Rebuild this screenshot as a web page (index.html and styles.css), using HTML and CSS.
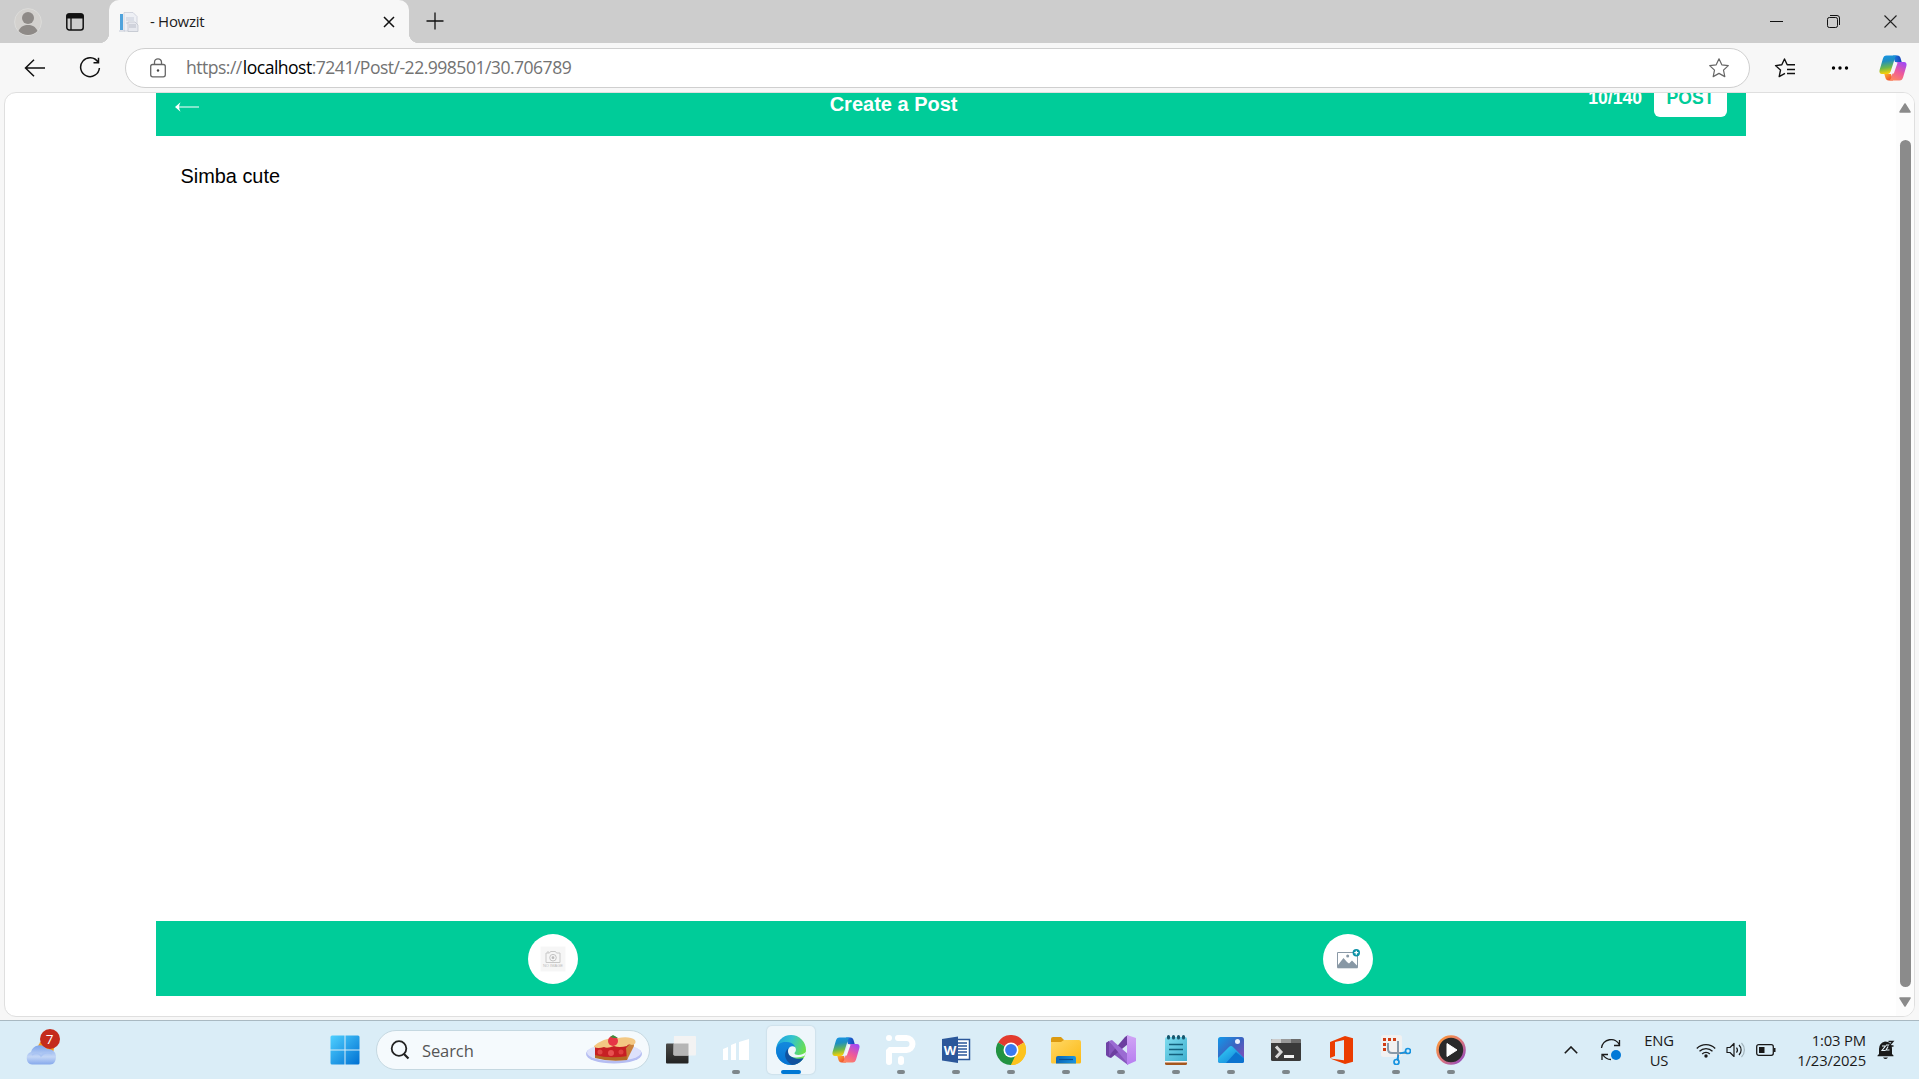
FILE: index.html
```html
<!DOCTYPE html>
<html lang="en">
<head>
<meta charset="utf-8">
<title>- Howzit</title>
<link rel="stylesheet" href="styles.css">
</head>
<body>
<svg class="defs" width="0" height="0" aria-hidden="true">
  <defs>
    <linearGradient id="cpA" x1="0" y1="0" x2="0.15" y2="1"><stop offset="0" stop-color="#1595e8"/><stop offset=".35" stop-color="#1f8fc0"/><stop offset=".7" stop-color="#6cb84c"/><stop offset="1" stop-color="#f5cf0a"/></linearGradient>
    <linearGradient id="cpB" x1="0.7" y1="0" x2="0.2" y2="1"><stop offset="0" stop-color="#a54af0"/><stop offset=".5" stop-color="#ee5a9a"/><stop offset="1" stop-color="#ff8a5c"/></linearGradient>
    <linearGradient id="cpC" x1="0" y1="0" x2="1" y2="0"><stop offset="0" stop-color="#1b7fe0"/><stop offset="1" stop-color="#1740b8"/></linearGradient>
    <linearGradient id="cpD" x1="0" y1="0" x2="1" y2="1"><stop offset="0" stop-color="#ffb02e"/><stop offset="1" stop-color="#ea3a30"/></linearGradient>
    <symbol id="copilot" viewBox="0 0 28 26">
      <path d="M14 .5h4.500c1.700 0 2.500 1 3 2.500l1.200 4H16z" fill="url(#cpC)"/>
      <path d="M14 25.500H9.500c-1.700 0-2.500-1-3-2.500l-1.200-4H12z" fill="url(#cpD)"/>
      <path d="M7.500.5h10.800c-1.300.3-2 1.300-2.500 3l-4 12.500c-.6 2-1.500 3-3.300 3H3C.8 19 0 17.200.6 15L3.800 4C4.500 1.500 5.500.5 7.500.5z" fill="url(#cpA)"/>
      <path d="M20.500 25.500H9.700c1.300-.3 2-1.300 2.500-3l4-12.500c.6-2 1.500-3 3.300-3H25c2.200 0 3 1.800 2.400 4l-3.200 11c-.7 2.500-1.700 3.500-3.700 3.500z" fill="url(#cpB)"/>
      <path d="M15.800 8h2.700l-3.700 10.500h-3z" fill="#f3f3fa"/>
    </symbol>
    <linearGradient id="win" x1="0" y1="0" x2="1" y2="1"><stop offset="0" stop-color="#4fd0ff"/><stop offset="1" stop-color="#0070d2"/></linearGradient>
    <linearGradient id="cloud" x1="0" y1="0" x2="0" y2="1"><stop offset="0" stop-color="#7da4ea"/><stop offset=".6" stop-color="#c3d6f6"/><stop offset="1" stop-color="#86a9ec"/></linearGradient>
    <linearGradient id="dark" x1="0" y1="0" x2="0" y2="1"><stop offset="0" stop-color="#4a4a48"/><stop offset="1" stop-color="#222"/></linearGradient>
    <linearGradient id="edgeTop" x1="0" y1="0" x2="1" y2=".4"><stop offset="0" stop-color="#1b9de2"/><stop offset=".5" stop-color="#32c3cf"/><stop offset="1" stop-color="#6be04c"/></linearGradient>
    <linearGradient id="edgeLow" x1="0" y1="0" x2="0" y2="1"><stop offset="0" stop-color="#1389dd"/><stop offset="1" stop-color="#0672d3"/></linearGradient>
    <linearGradient id="folder" x1="0" y1="0" x2="1" y2="1"><stop offset="0" stop-color="#ffd866"/><stop offset="1" stop-color="#fcb913"/></linearGradient>
    <linearGradient id="folderTag" x1="0" y1="0" x2="1" y2="0"><stop offset="0" stop-color="#0a66b8"/><stop offset="1" stop-color="#1b95e0"/></linearGradient>
    <linearGradient id="note" x1="0" y1="0" x2="1" y2="1"><stop offset="0" stop-color="#7fdcef"/><stop offset="1" stop-color="#3fb0cf"/></linearGradient>
    <linearGradient id="photo" x1="0" y1="0" x2="1" y2="1"><stop offset="0" stop-color="#1299ea"/><stop offset=".5" stop-color="#3c62c0"/><stop offset="1" stop-color="#9349b8"/></linearGradient>
    <linearGradient id="hill" x1="0" y1="0" x2="1" y2="1"><stop offset="0" stop-color="#38d4f5"/><stop offset="1" stop-color="#0c78d8"/></linearGradient>
    <linearGradient id="ring" x1="0" y1="0" x2="1" y2="1"><stop offset="0" stop-color="#ff9a2e"/><stop offset=".5" stop-color="#e07878"/><stop offset="1" stop-color="#8a44c8"/></linearGradient>
    <linearGradient id="vsR" x1="0" y1="0" x2="0" y2="1"><stop offset="0" stop-color="#d0a4f5"/><stop offset="1" stop-color="#b77df0"/></linearGradient>
  </defs>
</svg>

<header class="titlebar">
  <svg class="avatar" width="28" height="28" viewBox="0 0 28 28"><circle cx="14" cy="14" r="13.400" fill="#d3d1ce" stroke="#dcdcda"/><circle cx="14" cy="10" r="6" fill="#8e8a87"/><path d="M4.500 23c2-4.500 5.500-6 9.500-6s7.500 1.500 9.500 6a13.400 13.400 0 0 1-19 0z" fill="#8e8a87"/></svg>
  <svg class="tab-actions" width="20" height="20" viewBox="0 0 20 20"><rect x="1.800" y="2" width="16.400" height="16" rx="2.500" fill="none" stroke="#111" stroke-width="1.500"/><path d="M1.500 6.500V4q0-2.700 2.700-2.700h11.600q2.700 0 2.700 2.700v2.500z" fill="#111"/><path d="M6 6v12" stroke="#111" stroke-width="1.300"/></svg>
  <div class="tab">
    <svg width="20" height="20" viewBox="0 0 20 20"><path d="M5 .5h9l4 4V19H5z" fill="#eef0f5" stroke="#c9cdd8" stroke-width=".8"/><path d="M1 2h3v16H1z" fill="#4fa3dc"/><path d="M0 19h6M7 6h8M7 8h8M7 11h6" stroke="#c6cbd8"/><path d="M9 10h7l3 3v6.500H9z" fill="#e6e8ee" stroke="#bcc0ca" stroke-width=".7"/><path d="M10 13h7M10 15h7" stroke="#b9bdc9"/></svg>
    <span class="tab-title">- Howzit</span>
    <svg class="tab-close" width="12" height="12" viewBox="0 0 12 12"><path d="M1 1l10 10M11 1L1 11" stroke="#111" stroke-width="1.500"/></svg>
  </div>
  <svg class="new-tab" width="18" height="18" viewBox="0 0 18 18"><path d="M9 .5v17M.5 9h17" stroke="#111" stroke-width="1.300"/></svg>
  <div class="window-controls">
    <svg width="13" height="13" viewBox="0 0 13 13"><path d="M0 6.500h13" stroke="#111"/></svg>
    <svg width="13" height="13" viewBox="0 0 13 13"><rect x=".5" y="2.500" width="10" height="10" rx="1.800" fill="none" stroke="#111"/><path d="M3 .5h7q2.500 0 2.500 2.500v7" fill="none" stroke="#111"/></svg>
    <svg width="13" height="13" viewBox="0 0 13 13"><path d="M.5.5l12 12M12.500.5l-12 12" stroke="#222" stroke-width="1.100"/></svg>
  </div>
</header>

<nav class="toolbar">
  <svg class="back" width="22" height="18" viewBox="0 0 22 18"><path d="M21 9H1.500M10 .8L1.500 9l8.500 8.200" fill="none" stroke="#111" stroke-width="1.500"/></svg>
  <svg class="reload" width="22" height="22" viewBox="0 0 22 22"><path d="M19 5.200A9.400 9.400 0 1 0 20.400 11M19.500.8v5h-5" fill="none" stroke="#111" stroke-width="1.500"/></svg>
  <div class="address">
    <svg class="lock" width="18" height="20" viewBox="0 0 18 20"><rect x="1.700" y="6.500" width="14.600" height="12.300" rx="2" fill="none" stroke="#666" stroke-width="1.300"/><path d="M5.500 6.500V4.300a3.500 3.500 0 0 1 7 0v2.200" fill="none" stroke="#666" stroke-width="1.300"/><circle cx="9" cy="12.500" r="1.200" fill="#444"/></svg>
    <span class="url">https://<b>localhost</b>:7241/Post/-22.998501/30.706789</span>
    <svg class="star" width="22" height="22" viewBox="0 0 22 22"><path d="M11 1.800l2.800 6 6.500.8-4.800 4.500 1.300 6.500L11 16.400l-5.800 3.200 1.300-6.500L1.700 8.600l6.500-.8z" fill="none" stroke="#666" stroke-width="1.200" stroke-linejoin="round"/></svg>
  </div>
  <svg class="favorites" width="22" height="22" viewBox="0 0 22 22"><path d="M11 16.300l-5.800 3.300 1.300-6.500L1.500 8.600l6.300-.8L10.500 2l2.700 5.800H21M13 12.500h8M13 16.500h8" fill="none" stroke="#111" stroke-width="1.400" stroke-linejoin="round"/></svg>
  <svg class="more" width="18" height="6" viewBox="0 0 18 6"><circle cx="2.500" cy="3" r="1.700"/><circle cx="9" cy="3" r="1.700"/><circle cx="15.500" cy="3" r="1.700"/></svg>
  <svg class="copilot-button" width="28" height="26"><use href="#copilot"/></svg>
</nav>

<main class="viewport">
  <div class="page">
    <div class="post-header">
      <svg class="page-back" width="24" height="10" viewBox="0 0 24 10"><path d="M1 5h23" stroke="#fff" stroke-width="1.200" /><path d="M0 5L5.500.3Q4 3.500 4 5t1.500 4.700z" fill="#fff"/></svg>
      <h1>Create a Post</h1>
      <div class="post-actions"><span>10/140</span><button>POST</button></div>
    </div>
    <div class="post-text">Simba cute</div>
    <div class="post-footer">
      <div><span class="round"><svg width="26" height="26" viewBox="0 0 26 26"><path d="M.5.5h25v25H.5z" fill="#f6f6f6"/><path d="M6 7h3.500l1-1.500h5L16.500 7H20v9.500H6zM7 6h2" fill="none" stroke="#c8c8c8"/><circle cx="13" cy="11.700" r="3.300" fill="none" stroke="#c4c4c4"/><circle cx="13" cy="11.700" r="1.400" fill="#bbb"/><text x="13" y="21" text-anchor="middle" class="no-image">NO IMAGE</text></svg></span></div>
      <div><span class="round"><svg width="26" height="26" viewBox="0 0 26 26"><path d="M2.500 6.500h20v15.300h-20z" fill="#fff" stroke="#8a99a6"/><path d="M3 19l3.500-4.500 2-2.500 3.500 4 2 1.500 3-3 5 5v2.500H3z" fill="#8898a5"/><circle cx="12.700" cy="10" r="1.500" fill="#8898a5"/><circle cx="21.300" cy="6.700" r="3.700" fill="#0b91a6"/><path d="M21.300 4.700v4M19.300 6.700h4" stroke="#fff" stroke-width="1.300"/></svg></span></div>
    </div>
  </div>
  <div class="scrollbar">
    <svg width="12" height="10" viewBox="0 0 12 10"><path d="M6 1l5 8H1z" fill="#8b8b8b" stroke="#8b8b8b" stroke-width="1.500" stroke-linejoin="round"/></svg>
    <div class="thumb"></div>
    <svg width="12" height="10" viewBox="0 0 12 10"><path d="M6 9l5-8H1z" fill="#8b8b8b" stroke="#8b8b8b" stroke-width="1.500" stroke-linejoin="round"/></svg>
  </div>
</main>

<footer class="taskbar">
  <svg class="weather" width="36" height="38" viewBox="0 0 36 38"><circle cx="21" cy="20" r="8" fill="#f59a1c"/><path d="M7 36.500a6.500 6.500 0 0 1-1-12.500 9 9 0 0 1 16-3 8 8 0 0 1 9 7c0 5-2 8.500-6 8.500z" fill="url(#cloud)"/><path d="M7 27c4-3 8-1 9 1 3-4 8-4 11-2" fill="none" stroke="#a9c3f3" stroke-width="1.500"/><circle cx="25" cy="11" r="10" fill="#c42b1c"/><text x="24.500" y="16" text-anchor="middle" class="badge">7</text></svg>
  <svg class="start" width="30" height="30" viewBox="0 0 30 30"><path d="M.5 2q0-1.500 1.500-1.500h12.500v14H.5zM15.500.5H28q1.500 0 1.500 1.500v12.500h-14zM.5 15.500h14v14H2q-1.500 0-1.500-1.500zM15.500 15.500h14V28q0 1.500-1.500 1.500H15.500z" fill="url(#win)"/></svg>
  <div class="search">
    <svg width="20" height="20" viewBox="0 0 20 20"><circle cx="9" cy="8.500" r="7.300" fill="none" stroke="#222" stroke-width="1.800"/><path d="M14 14l4.500 4.500" stroke="#222" stroke-width="2.200"/></svg>
    <span>Search</span>
    <svg class="pie" width="56" height="30" viewBox="0 0 56 30"><ellipse cx="28" cy="19" rx="28" ry="9.500" fill="#b5bdf2"/><ellipse cx="28" cy="17.500" rx="27" ry="8.500" fill="#dde1fb"/><path d="M9 12l36-3-4 14q-18 3-32-2z" fill="#c71f24"/><path d="M9 20q14 4 33 1l-1 4q-18 2-32-2z" fill="#b46a25"/><path d="M47 6l1 5-7 14-1-12z" fill="#c9803b"/><path d="M8 11Q18 2 32 3q12-2 17 2 2 4-3 5-4-2-5 1-8 2-13 0-7 3-10 1-6 2-10 0z" fill="#f3c884"/><circle cx="14" cy="17" r="2.500" fill="#e04545"/><circle cx="25" cy="18" r="3" fill="#e85050"/><circle cx="35" cy="17" r="2.500" fill="#e04040"/><circle cx="27" cy="6" r="5" fill="#e63546"/><path d="M24 2l3-2 5 3-4 0z" fill="#3d8b3a"/></svg>
  </div>
  <div class="apps">
    <div class="app"><svg width="30" height="30" viewBox="0 0 30 30"><path d="M0 9.500q0-1 1-1h21.500v19q0 1-1 1H1q-1 0-1-1z" fill="url(#dark)"/><path d="M8 1h21q1 0 1 1v17q0 1.500-1 1.500H9q-1.500 0-1.500-1z" fill="#f3f3f3"/><path d="M7.500 8.500h15v12H9q-1.500 0-1.500-1z" fill="#b5b5b5"/></svg></div>
    <div class="app open"><svg width="30" height="30" viewBox="0 0 30 30"><path d="M2 14l5-2v13H2zM10 10l5-2v17h-5zM18 7l10-3v21H18z" fill="#fff"/></svg></div>
    <div class="app active"><svg width="30" height="30" viewBox="0 0 30 30"><circle cx="15" cy="15" r="15" fill="url(#edgeTop)"/><path d="M0 15C1 8 6 6.500 11 7c6 .5 8 4 8 5-2-1-7 0-7 5 0 6 6 9 10 8.500 3-.4 4-1.500 5-1.700A15 15 0 0 1 15 30C6 30 0 23 0 15z" fill="url(#edgeLow)"/><path d="M12.500 13c-5 4-5 12 3.500 17 5 0 9-3 11.500-7-5 2-16 1-15-10z" fill="#11529f"/><path d="M19 12c-3-2-7 0-7 4 0 3 2 6.500 8 6.500 4 0 6-1 8-1.500 1 0 2-3 2-4-4 4-12 3.500-11.500 1 .8-1 2.500-3 .5-6z" fill="#eef6fb"/></svg></div>
    <div class="app"><svg width="28" height="26"><use href="#copilot"/></svg></div>
    <div class="app open"><svg width="30" height="30" viewBox="0 0 30 30"><path d="M12 3h8.500a6 6 0 0 1 0 12H3v12" fill="none" stroke="#fff" stroke-width="6" stroke-linecap="round" stroke-linejoin="bevel"/><circle cx="3" cy="3" r="3" fill="#fff"/><path d="M15 24v3" stroke="#fff" stroke-width="6" stroke-linecap="round"/></svg></div>
    <div class="app open"><svg width="30" height="30" viewBox="0 0 30 30"><path d="M15 4.500h13.500v20H15z" fill="#fff" stroke="#2b579a" stroke-width="1.500"/><path d="M17 8h9M17 11h9M17 14h9M17 17h9M17 20h9" stroke="#2b579a" stroke-width="1.300"/><path d="M1 4l16-2.500V28L1 25.500z" fill="#2b579a"/><text x="9" y="19.500" text-anchor="middle" class="word">W</text></svg></div>
    <div class="app open"><svg width="30" height="30" viewBox="0 0 30 30"><path d="M15 15L2 7.500A15 15 0 0 1 28 7.500z" fill="#e33b2e"/><path d="M15 15L28 7.500A15 15 0 0 1 15 30z" fill="#fcc31e"/><path d="M2 7.500A15 15 0 0 0 15 30l6.500-11.250L15 15z" fill="#229342"/><path d="M15 7.500h13L20 19l-5 11a15 15 0 0 0 13-22.500z" fill="#fcc31e"/><circle cx="15" cy="15" r="7.500" fill="#fff"/><circle cx="15" cy="15" r="5.900" fill="#3a7af0"/></svg></div>
    <div class="app open"><svg width="30" height="30" viewBox="0 0 30 30"><path d="M0 4q0-2 2-2h8l3 3v5H0z" fill="#dc9a10"/><path d="M0 7h10l3-2h15q2 0 2 2v20q0 1.500-1.500 1.500h-27Q0 28.500 0 27z" fill="url(#folder)"/><path d="M5 28.500V23q0-2 2-2h16q2 0 2 2v5.500z" fill="url(#folderTag)"/><path d="M8 24.500h14" stroke="#0a4f93" stroke-width="1.200"/></svg></div>
    <div class="app open"><svg width="30" height="30" viewBox="0 0 30 30"><path d="M0 8l3-2 19 17v7L6 18l-4 4-2-2z" fill="#8655bd"/><path d="M0 8l3-2v16l-3-2z" fill="#6f42a5"/><path d="M22 0v9L5 23l-3-1L19 2z" fill="#6c3fa0"/><path d="M3 6l3-1 17 15-1 9z" fill="#9b6bd3"/><path d="M21 0l9 3v23l-9 4z" fill="url(#vsR)"/></svg></div>
    <div class="app open"><svg width="30" height="30" viewBox="0 0 30 30"><path d="M4 26.500h22v2q0 1.500-1.500 1.500h-19Q4 30 4 28.500z" fill="#a4561d"/><path d="M4 25h22v2.500H4z" fill="#f4f4f4"/><path d="M4 4q0-2 2-2h18q2 0 2 2v22H4z" fill="url(#note)"/><path d="M8 9.500h14M8 14.500h14M8 19.500h14" stroke="#14607c" stroke-width="1.600"/><path d="M7.500 1.500v1.500M12.500 1.500v1.500M17.500 1.500v1.500M22.500 1.500v1.500" stroke="#17576e" stroke-width="3" stroke-linecap="round"/></svg></div>
    <div class="app open"><svg width="30" height="30" viewBox="0 0 30 30"><rect x="2" y="2" width="26" height="26" rx="2.500" fill="url(#photo)"/><path d="M2 23l11-11q2-2 4 0l11 11v2.500q0 2.500-2.500 2.500h-21Q2 28 2 25.500z" fill="url(#hill)"/><path d="M10 28l10-11 8 7v1.500q0 2.500-2.500 2.500z" fill="#0b73cf"/><circle cx="21.500" cy="6.500" r="2.500" fill="#eaf0ff"/></svg></div>
    <div class="app open"><svg width="30" height="30" viewBox="0 0 30 30"><rect y="4" width="30" height="22" rx="1.500" fill="#3a3a3a"/><path d="M0 8V5.500Q0 4 1.500 4H10v4z" fill="#ccc"/><path d="M10 4h10v4H10z" fill="#999"/><path d="M20 4h8.500Q30 4 30 5.500V8H20z" fill="#6b6b6b"/><path d="M5 11.500l5 5.500-5 5.500" fill="none" stroke="#d8d8d8" stroke-width="3"/><path d="M13 21.500h10" stroke="#f2f2f2" stroke-width="3"/></svg></div>
    <div class="app open"><svg width="30" height="30" viewBox="0 0 30 30"><path d="M4 7l15-6 8 2.300v23.400L19 29 4 23.500l14 1.700V5L9 7v14l-5 2z" fill="#eb3c00"/></svg></div>
    <div class="app open"><svg width="30" height="30" viewBox="0 0 30 30"><rect x="0" y="0" width="21" height="22" rx="2.500" fill="#f1f1f1"/><path d="M3.500 16V4.500H16" fill="none" stroke="#d13d13" stroke-width="3" stroke-dasharray="3 2"/><path d="M7 8v6q0 4 4 4h15M17 6v20" fill="none" stroke="#8899a8" stroke-width="2"/><circle cx="27" cy="16" r="2.500" fill="none" stroke="#1492e0" stroke-width="1.700"/><circle cx="15.500" cy="27" r="2.500" fill="none" stroke="#1492e0" stroke-width="1.700"/><path d="M19 18.500l5.500-1.500M17.500 20l-1.300 4.500" stroke="#1492e0" stroke-width="1.700"/></svg></div>
    <div class="app open"><svg width="30" height="30" viewBox="0 0 30 30"><circle cx="15" cy="15" r="13.500" fill="#2a2a2a" stroke="url(#ring)" stroke-width="2.600"/><path d="M11 8.500l10 6.500-10 6.500z" fill="#fff" stroke="#fff" stroke-linejoin="round"/></svg></div>
  </div>
  <div class="tray">
    <svg class="chevron" width="14" height="8" viewBox="0 0 14 8"><path d="M.8 7.300L7 1l6.200 6.300" fill="none" stroke="#1a1a1a" stroke-width="1.600"/></svg>
    <svg class="sync" width="22" height="22" viewBox="0 0 22 22"><path d="M1.500 9A9.500 9.500 0 0 1 19.500 6M19.500 1v5.500H14M11 20.500a9.500 9.500 0 0 1-8-4.500M2 21v-5.500h6" fill="none" stroke="#1a1a1a" stroke-width="1.300"/><circle cx="16" cy="16" r="5" fill="#0078d7"/></svg>
    <div class="lang">ENG<br>US</div>
    <svg class="wifi" width="20" height="16" viewBox="0 0 20 16"><path d="M.8 6.500a13 13 0 0 1 18.400 0M3.500 9.300a9.200 9.200 0 0 1 13 0M6.200 12a5.400 5.400 0 0 1 7.600 0" fill="none" stroke="#1a1a1a" stroke-width="1.300"/><circle cx="10" cy="14" r="1.700" fill="#1a1a1a"/></svg>
    <svg class="sound" width="20" height="16" viewBox="0 0 20 16"><path d="M1 5.500h3l4-4v13l-4-4H1z" fill="none" stroke="#1a1a1a" stroke-width="1.200" stroke-linejoin="round"/><path d="M10.500 5.500a4 4 0 0 1 0 5M13 3a7 7 0 0 1 0 10" fill="none" stroke="#1a1a1a" stroke-width="1.200"/><path d="M15.500 1a10 10 0 0 1 0 14" fill="none" stroke="#a3b4bc" stroke-width="1.200"/></svg>
    <svg class="battery" width="20" height="12" viewBox="0 0 20 12"><rect x=".7" y=".7" width="16.600" height="10.600" rx="2" fill="none" stroke="#1a1a1a" stroke-width="1.300"/><path d="M3 3h5.500v6H3zM18 4h1.500v4H18z" fill="#1a1a1a"/></svg>
    <div class="clock">1:03 PM<br>1/23/2025</div>
    <svg class="bell" width="18" height="20" viewBox="0 0 18 20"><path d="M2 14V9q0-6 6-7.500 7 0 7 7.500v5l1.500 1.500v.8H.5v-.8zM6 17.500h5q-2.500 3-5 0z" fill="#1a1a1a"/><path d="M5 6h3.500L5 10.500h3.500M9 5h3l-3 5h3.500" fill="none" stroke="#e6f3fa" stroke-width="1.100"/><path d="M11.500 1.500H16L12 6h4.500" fill="none" stroke="#1a1a1a" stroke-width="1.300"/></svg>
  </div>
</footer>
</body>
</html>
```

FILE: styles.css
```css
* { box-sizing: border-box; }
body {
  margin: 0;
  width: 1919px;
  height: 1079px;
  display: flex;
  flex-direction: column;
  overflow: hidden;
  background: #f7f7f7;
  font-family: "Open Sans", "Noto Sans", sans-serif;
}
svg { display: block; flex: none; }
.defs { position: absolute; }

.titlebar {
  height: 43px;
  flex: none;
  display: flex;
  align-items: center;
  background: #cdcdcd;
}
.avatar { margin-left: 14px; }
.tab-actions { margin-left: 23px; }
.tab {
  position: relative;
  width: 300px;
  height: 43px;
  margin-left: 24px;
  padding: 0 14px 0 10px;
  display: flex;
  align-items: center;
  background: #f7f7f7;
  border-radius: 10px 10px 0 0;
}
.tab::before, .tab::after {
  content: "";
  position: absolute;
  bottom: 0;
  width: 10px;
  height: 10px;
}
.tab::before { left: -10px; background: radial-gradient(circle at 0 0, #cdcdcd 10px, #f7f7f7 10.5px); }
.tab::after { right: -10px; background: radial-gradient(circle at 100% 0, #cdcdcd 10px, #f7f7f7 10.5px); }
.tab-title { margin: -2px 0 0 11px; font-size: 15px; letter-spacing: -0.3px; color: #1c1c1c; }
.tab-close { margin-left: auto; }
.new-tab { margin-left: 17px; margin-top: -2px; }
.window-controls { margin-left: auto; margin-right: 22px; display: flex; gap: 44px; }

.toolbar {
  height: 49px;
  flex: none;
  display: flex;
  align-items: center;
}
.back { margin-left: 24px; }
.reload { margin-left: 33px; }
.address {
  width: 1625px;
  height: 40px;
  margin-left: 24px;
  padding: 0 19px 0 23px;
  display: flex;
  align-items: center;
  background: #fff;
  border: 1px solid #cfcfcf;
  border-radius: 20px;
}
.url { margin: -1px 0 0 19px; font-size: 17.6px; letter-spacing: -0.53px; color: #737373; white-space: nowrap; }
.url b { margin-left: 1px; font-weight: 400; color: #000; }
.star { margin-left: auto; }
.favorites { margin-left: 24px; }
.more { margin-left: 35px; }
.copilot-button { margin-left: 30px; }

.viewport {
  height: 925px;
  flex: none;
  margin: 0 4px 0 4px;
  display: flex;
  background: #fff;
  border: 1px solid #dfdfdf;
  border-radius: 12px;
  overflow: hidden;
}
.page {
  width: 1590px;
  margin-left: 151px;
  font-family: "Liberation Sans", Arial, sans-serif;
}
.post-header {
  height: 75px;
  margin-top: -32px;
  padding: 0 19px;
  display: flex;
  justify-content: space-between;
  align-items: center;
  background: #00cc99;
  color: #fff;
}
.page-back { margin-top: 16px; }
h1 { margin: 10px 0 0; font-size: 20px; line-height: 24px; font-weight: 700; }
.post-actions { display: flex; align-items: center; gap: 12px; font-size: 17.6px; font-weight: 700; }
.post-actions button {
  width: 73px;
  height: 37px;
  padding: 0;
  border: 0;
  border-radius: 6px;
  background: #fff;
  color: #00cc99;
  font: inherit;
}
.post-text { height: 785px; padding: 29px 24.5px; font-size: 19.9px; line-height: 23px; color: #000; }
.post-footer { height: 75px; display: grid; grid-template-columns: 1fr 1fr; background: #00cc99; }
.post-footer > div { display: grid; place-items: center; padding-right: 1px; }
.round { width: 50px; height: 50px; border-radius: 50%; display: grid; place-items: center; background: #fff; }
.no-image { font-size: 4px; fill: #bbb; }
.scrollbar {
  width: 18px;
  margin-left: auto;
  padding: 10px 0 8px;
  display: flex;
  flex-direction: column;
  align-items: center;
  background: #fcfcfc;
}
.thumb { width: 11px; height: 847px; margin: 27px 0 10px; border-radius: 6px; background: #8b8b8b; }

.taskbar {
  height: 59px;
  flex: none;
  margin-top: 3px;
  display: flex;
  align-items: center;
  background: #daedf7;
  border-top: 1px solid #a9b9c2;
}
.weather { margin: -7px 0 0 25px; }
.badge { font-size: 13.5px; fill: #fff; }
.start { margin-left: 269px; }
.search {
  width: 274px;
  height: 40px;
  margin-left: 16px;
  padding: 0 7px 0 13px;
  display: flex;
  align-items: center;
  background: #f5fafd;
  border: 1px solid #c5d8e1;
  border-radius: 20px;
}
.search span { margin: 1px 0 0 12px; font-size: 16.5px; color: #555; letter-spacing: -0.1px; }
.pie { margin-left: auto; }
.apps { margin-left: 7px; display: flex; gap: 7px; }
.app {
  position: relative;
  width: 48px;
  height: 48px;
  display: grid;
  place-items: center;
  border-radius: 5px;
}
.active { background: #eef6fb; box-shadow: 0 0 1px 1px #cfe1eb; }
.open::after, .active::after {
  content: "";
  position: absolute;
  left: 20px;
  bottom: 0;
  width: 8px;
  height: 4px;
  border-radius: 2px;
  background: #7d868b;
}
.active::after { left: 14px; width: 20px; background: #0078d4; }
.word { font: 700 13px "Open Sans", sans-serif; fill: #fff; }
.tray { margin-left: auto; display: flex; align-items: center; color: #1a1a1a; font-size: 14.8px; letter-spacing: -0.15px; line-height: 20px; }
.sync { margin-left: 22px; }
.lang { width: 40px; margin-left: 17px; text-align: center; }
.wifi { margin-left: 17px; }
.sound { margin-left: 10px; }
.battery { margin-left: 10px; }
.clock { width: 80px; margin-left: 10px; text-align: right; white-space: nowrap; }
.bell { margin: 0 24px 0 11px; }
```
